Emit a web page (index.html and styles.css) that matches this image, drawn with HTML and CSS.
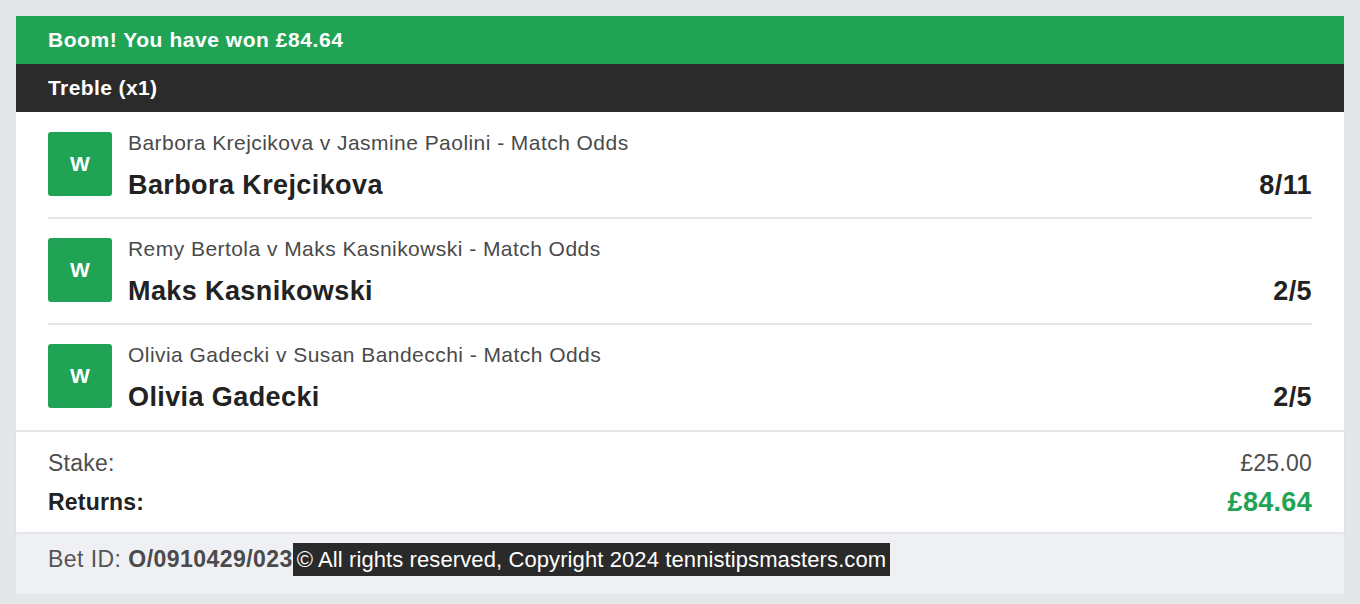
FILE: index.html
```html
<!DOCTYPE html>
<html lang="en">
<head>
<meta charset="utf-8">
<title>Bet receipt</title>
<link rel="stylesheet" href="styles.css">
</head>
<body>
<div class="card">
  <div class="win-banner">Boom! You have won £84.64</div>
  <div class="bet-type">Treble (x1)</div>
  <div class="selections">
    <div class="selection">
      <div class="badge">W</div>
      <div class="sel-body">
        <div class="market">Barbora Krejcikova v Jasmine Paolini - Match Odds</div>
        <div class="pick-line"><span class="pick">Barbora Krejcikova</span><span class="odds">8/11</span></div>
      </div>
    </div>
    <div class="selection">
      <div class="badge">W</div>
      <div class="sel-body">
        <div class="market">Remy Bertola v Maks Kasnikowski - Match Odds</div>
        <div class="pick-line"><span class="pick">Maks Kasnikowski</span><span class="odds">2/5</span></div>
      </div>
    </div>
    <div class="selection">
      <div class="badge">W</div>
      <div class="sel-body">
        <div class="market">Olivia Gadecki v Susan Bandecchi - Match Odds</div>
        <div class="pick-line"><span class="pick">Olivia Gadecki</span><span class="odds">2/5</span></div>
      </div>
    </div>
  </div>
  <div class="summary">
    <div class="sum-row stake"><span>Stake:</span><span>£25.00</span></div>
    <div class="sum-row returns"><span>Returns:</span><span class="ret-val">£84.64</span></div>
  </div>
  <div class="footer"><span class="bet-id">Bet ID: <b>O/0910429/023</b></span><span class="copyright">© All rights reserved, Copyright 2024 tennistipsmasters.com</span></div>
</div>
</body>
</html>
```
FILE: styles.css
```css
html, body {
  margin: 0;
  padding: 0;
}
body {
  background: #e4e7ea;
  font-family: "Liberation Sans", Arial, sans-serif;
  padding: 16px 16px 10px;
}
.card {
  background: #fff;
}
.win-banner {
  background: #21a355;
  color: #fff;
  font-weight: bold;
  font-size: 21px;
  letter-spacing: 0.55px;
  height: 48px;
  line-height: 48px;
  padding: 0 32px;
}
.bet-type {
  background: #2b2b2b;
  color: #fff;
  font-weight: bold;
  font-size: 21px;
  letter-spacing: 0.4px;
  height: 48px;
  line-height: 48px;
  padding: 0 32px;
}
.selections {
  padding: 1px 32px 0;
}
.selection {
  display: flex;
  align-items: flex-start;
  gap: 16px;
  padding: 19px 0 21px;
  border-bottom: 2px solid #e6e6e6;
}
.selection:last-child {
  border-bottom: none;
  padding-bottom: 22px;
}
.badge {
  flex: none;
  width: 64px;
  height: 64px;
  border-radius: 3px;
  background: #21a355;
  color: #fff;
  font-weight: bold;
  font-size: 21px;
  display: flex;
  align-items: center;
  justify-content: center;
}
.sel-body {
  flex: 1;
  display: flex;
  flex-direction: column;
  height: 64px;
}
.market {
  font-size: 21px;
  letter-spacing: 0.45px;
  color: #4a4a4a;
  line-height: 22px;
}
.pick-line {
  display: flex;
  justify-content: space-between;
  align-items: center;
  margin-top: 20px;
  line-height: 22px;
  font-size: 27px;
  font-weight: bold;
  letter-spacing: 0.4px;
  color: #222;
}
.summary {
  border-top: 2px solid #e6e6e6;
  padding: 18px 32px 16px;
  box-shadow: 0 1px 2px rgba(0, 0, 0, 0.08);
  position: relative;
}
.sum-row {
  display: flex;
  justify-content: space-between;
  align-items: center;
}
.stake {
  font-size: 23px;
  letter-spacing: 0.25px;
  color: #4d4d4d;
  line-height: 26px;
}
.returns {
  margin-top: 12px;
  font-size: 23px;
  font-weight: bold;
  letter-spacing: 0.2px;
  color: #222;
  line-height: 28px;
}
.ret-val {
  font-size: 27px;
  letter-spacing: 0.3px;
  color: #21a355;
}
.footer {
  background: #eef0f3;
  padding: 11px 32px 18px;
  display: flex;
  align-items: center;
}
.bet-id {
  font-size: 23px;
  letter-spacing: 0.45px;
  color: #555;
  line-height: 33px;
}
.bet-id b {
  color: #4a4a4a;
}
.copyright {
  display: inline-block;
  background: #2a2a2a;
  color: #fff;
  font-size: 22px;
  letter-spacing: 0.1px;
  line-height: 33px;
  padding: 0 4px;
}
```
